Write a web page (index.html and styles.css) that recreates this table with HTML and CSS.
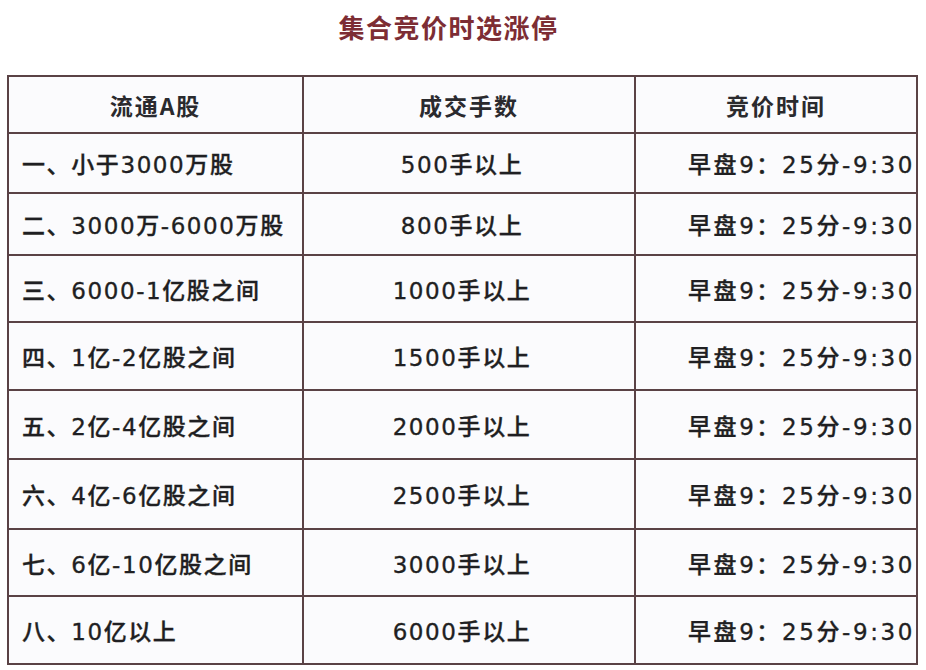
FILE: index.html
```html
<!DOCTYPE html>
<html lang="zh-CN">
<head>
<meta charset="utf-8">
<title>集合竞价时选涨停</title>
<link rel="stylesheet" href="styles.css">
</head>
<body>
<div class="page">
  <h1 class="title">集合竞价时选涨停</h1>
  <table class="grid">
    <colgroup>
      <col class="c1"><col class="c2"><col class="c3">
    </colgroup>
    <tr class="head">
      <th>流通A股</th><th>成交手数</th><th>竞价时间</th>
    </tr>
    <tr class="r1"><td class="name">一、小于3000万股</td><td class="vol">500手以上</td><td class="time">早盘9：25分-9:30</td></tr>
    <tr class="r2"><td class="name">二、3000万-6000万股</td><td class="vol">800手以上</td><td class="time">早盘9：25分-9:30</td></tr>
    <tr class="r3"><td class="name">三、6000-1亿股之间</td><td class="vol">1000手以上</td><td class="time">早盘9：25分-9:30</td></tr>
    <tr class="r4"><td class="name">四、1亿-2亿股之间</td><td class="vol">1500手以上</td><td class="time">早盘9：25分-9:30</td></tr>
    <tr class="r5"><td class="name">五、2亿-4亿股之间</td><td class="vol">2000手以上</td><td class="time">早盘9：25分-9:30</td></tr>
    <tr class="r6"><td class="name">六、4亿-6亿股之间</td><td class="vol">2500手以上</td><td class="time">早盘9：25分-9:30</td></tr>
    <tr class="r7"><td class="name">七、6亿-10亿股之间</td><td class="vol">3000手以上</td><td class="time">早盘9：25分-9:30</td></tr>
    <tr class="r8"><td class="name">八、10亿以上</td><td class="vol">6000手以上</td><td class="time">早盘9：25分-9:30</td></tr>
  </table>
</div>
</body>
</html>
```

FILE: styles.css
```css
html, body {
  margin: 0;
  padding: 0;
  background: #ffffff;
}

.page {
  width: 926px;
  height: 670px;
  padding: 0 0 0 7px;
  box-sizing: border-box;
  overflow: hidden;
  font-family: "DejaVu Sans", "Noto Sans CJK SC", sans-serif;
  color: #1f1f22;
}

.title {
  margin: 0;
  padding: 12px 36px 0 0;
  height: 75px;
  box-sizing: border-box;
  text-align: center;
  font-family: "Noto Sans CJK SC", sans-serif;
  font-size: 26px;
  font-weight: 700;
  letter-spacing: 1.5px;
  line-height: 30px;
  color: #7d2d34;
}

.grid {
  border-collapse: collapse;
  table-layout: fixed;
  width: 909px;
  background: #fbfbfd;
}

.c1 { width: 295px; }
.c2 { width: 332px; }
.c3 { width: 282px; }

.grid th,
.grid td {
  border: 2px solid #5a4245;
  padding: 0;
  white-space: nowrap;
  overflow: hidden;
  vertical-align: middle;
}

.grid th {
  font-family: "Noto Sans CJK SC", sans-serif;
  font-size: 23px;
  font-weight: 700;
  letter-spacing: 2px;
  text-align: center;
  color: #2a2a2e;
}

.grid td {
  font-size: 23px;
  font-weight: 500;
  letter-spacing: 1.6px;
  -webkit-text-stroke: 0.35px #1f1f22;
}

.grid .name {
  text-align: left;
  padding-left: 13px;
}

.grid .vol {
  text-align: center;
  padding-right: 14px;
}

.grid .time {
  text-align: right;
  padding-right: 1px;
  letter-spacing: 2.6px;
}

.head { height: 57px; }
.r1 { height: 60px; }
.r2 { height: 62px; }
.r3 { height: 67px; }
.r4 { height: 68px; }
.r5 { height: 69px; }
.r6 { height: 70px; }
.r7 { height: 67px; }
.r8 { height: 68px; }
```
